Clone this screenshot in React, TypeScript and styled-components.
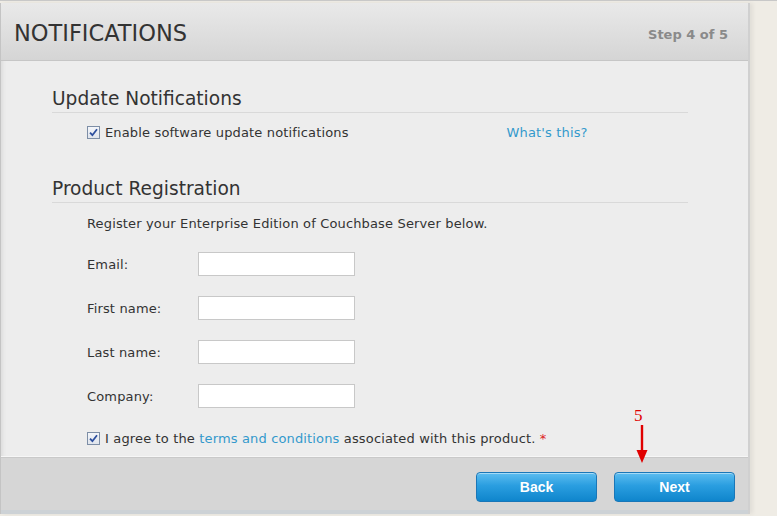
import React from "react";
import styled, { createGlobalStyle } from "styled-components";

const GlobalStyle = createGlobalStyle`
  html, body {
    margin: 0;
    padding: 0;
    background: #efece5;
    font-family: "DejaVu Sans", Verdana, sans-serif;
  }
`;

const fields = ["Email:", "First name:", "Last name:", "Company:"];

const CheckBox = () => (
  <Box>
    <svg width="9" height="9" viewBox="0 0 9 9">
      <path
        d="M1 4.6 L3.4 7.2 L8 1.2"
        fill="none"
        stroke="#2d4f9e"
        strokeWidth="1.8"
      />
    </svg>
  </Box>
);

const App = () => {
  return (
    <>
      <GlobalStyle />
      <Page>
        <Panel>
          <Header>
            <h1>NOTIFICATIONS</h1>
            <span>Step 4 of 5</span>
          </Header>
          <Body>
            <Section>
              <Heading>Update Notifications</Heading>
              <CheckRow>
                <CheckBox />
                <span>Enable software update notifications</span>
                <Link $left={158}>What's this?</Link>
              </CheckRow>
            </Section>
            <Section $top={34}>
              <Heading>Product Registration</Heading>
              <Intro>Register your Enterprise Edition of Couchbase Server below.</Intro>
              <Form>
                {fields.map((f) => (
                  <Field key={f}>
                    <label>{f}</label>
                    <Input type="text" />
                  </Field>
                ))}
              </Form>
              <CheckRow $top={20}>
                <CheckBox />
                <span>
                  I agree to the <Link>terms and conditions</Link> associated
                  with this product. <Req>*</Req>
                </span>
              </CheckRow>
            </Section>
          </Body>
          <Footer>
            <Button>Back</Button>
            <Button>Next</Button>
          </Footer>
          <Marker>
            <span>5</span>
            <svg width="14" height="40" viewBox="0 0 14 40">
              <line x1="7" y1="0" x2="7" y2="28" stroke="#e00000" strokeWidth="2.4" />
              <path d="M1.5 25 L7 38 L12.5 25 Z" fill="#e00000" />
            </svg>
          </Marker>
        </Panel>
      </Page>
    </>
  );
};

export default App;

const Page = styled.div`
  width: 777px;
  height: 516px;
  overflow: hidden;
  padding-top: 2px;
  box-sizing: border-box;
  background: #efece5;
  border-top: 1px solid #c8c8c8;
`;

const Panel = styled.div`
  position: relative;
  width: 750px;
  background: #ededed;
  border-left: 1px solid #c4c4c4;
  border-right: 2px solid #d0d0d0;
  box-shadow: inset 4px 0 4px -3px #d6d6d6, 3px 0 4px rgba(0, 0, 0, 0.06);
  box-sizing: border-box;
`;

const Header = styled.div`
  height: 58px;
  display: flex;
  align-items: center;
  justify-content: space-between;
  padding: 3px 20px 0 13px;
  background: linear-gradient(#e9e9e9, #d5d5d5);
  border-bottom: 1px solid #c6c6c6;
  box-sizing: border-box;

  h1 {
    margin: 0;
    font-size: 22.5px;
    font-weight: normal;
    color: #333;
  }

  span {
    font-size: 13px;
    font-weight: bold;
    color: #8a8a8a;
    margin-top: 2px;
  }
`;

const Body = styled.div`
  height: 397px;
  padding: 25px 60px 0 51px;
  border-bottom: 1px solid #c9c9c9;
  box-shadow: inset 0 -1px 0 #f6f6f6;
  box-sizing: border-box;
  overflow: hidden;
`;

const Section = styled.div<{ $top?: number }>`
  margin-top: ${(p) => p.$top ?? 0}px;
`;

const Heading = styled.h2`
  margin: 0;
  font-size: 18.6px;
  line-height: 24px;
  font-weight: normal;
  color: #333;
  padding: 1px 0 1px;
  border-bottom: 1px solid #d9d9d9;
`;

const CheckRow = styled.div<{ $top?: number }>`
  display: flex;
  align-items: center;
  margin-top: ${(p) => p.$top ?? 9}px;
  padding-left: 35px;
  height: 20px;
  font-size: 13px;
  letter-spacing: 0.15px;
  color: #333;
  white-space: nowrap;
`;

const Box = styled.span`
  display: inline-flex;
  align-items: center;
  justify-content: center;
  width: 11px;
  height: 11px;
  margin-right: 5px;
  border: 1px solid #7d8ea6;
  background: linear-gradient(#f4f6fa, #dfe4ec);
`;

const Link = styled.span<{ $left?: number }>`
  color: #3399cc;
  margin-left: ${(p) => p.$left ?? 0}px;
`;

const Req = styled.span`
  color: #dd2222;
`;

const Intro = styled.p`
  margin: 11px 0 0 35px;
  font-size: 13px;
  letter-spacing: 0.15px;
  line-height: 20px;
  color: #333;
`;

const Form = styled.div`
  display: flex;
  flex-direction: column;
  gap: 20px;
  margin-top: 18px;
  padding-left: 35px;
`;

const Field = styled.div`
  display: flex;
  align-items: center;
  height: 24px;

  label {
    width: 111px;
    font-size: 13px;
    letter-spacing: 0.15px;
    color: #333;
  }
`;

const Input = styled.input`
  width: 157px;
  height: 24px;
  box-sizing: border-box;
  border: 1px solid #c8c8c8;
  background: #fff;
  outline: none;
  padding: 0 4px;
`;

const Footer = styled.div`
  height: 56px;
  display: flex;
  justify-content: flex-end;
  align-items: flex-start;
  gap: 17px;
  padding: 14px 13px 0 0;
  background: #d6d6d6;
  box-sizing: border-box;
  border-bottom: 4px solid #cdd2d6;
`;

const Button = styled.button`
  width: 121px;
  height: 30px;
  border: 1px solid #1a77b8;
  border-radius: 4px;
  background: linear-gradient(#5cbdf0 0%, #2a9ee0 45%, #0f85cc 100%);
  box-shadow: inset 0 1px 0 rgba(255, 255, 255, 0.45);
  color: #fff;
  font-family: "Liberation Sans", Arial, sans-serif;
  font-size: 14px;
  font-weight: bold;
  cursor: pointer;
`;

const Marker = styled.div`
  position: absolute;
  left: 633px;
  top: 404px;
  display: flex;
  flex-direction: column;
  align-items: center;

  span {
    font-family: "Liberation Serif", serif;
    font-size: 17px;
    line-height: 18px;
    color: #e00000;
    margin-right: 8px;
  }
`;
